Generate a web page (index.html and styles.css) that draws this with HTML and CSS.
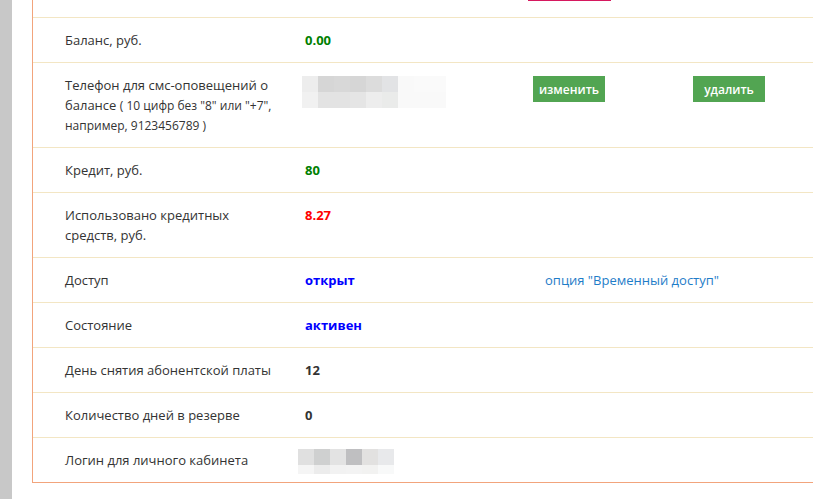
FILE: index.html
```html
<!DOCTYPE html>
<html lang="ru">
<head>
<meta charset="utf-8">
<title>Абонент</title>
<link rel="stylesheet" href="styles.css">
</head>
<body>
<div class="page">
  <div class="strip"></div>
  <div class="card">
    <div class="row top">
      <div class="cell label"></div>
      <div class="cell value"></div>
      <div class="cell extra"><div class="pinkbar"></div></div>
      <div class="cell extra2"></div>
    </div>
    <div class="row">
      <div class="cell label">Баланс, руб.</div>
      <div class="cell value"><b class="green">0.00</b></div>
      <div class="cell extra"></div>
      <div class="cell extra2"></div>
    </div>
    <div class="row">
      <div class="cell label">Телефон для смс-оповещений о балансе <span class="small">( 10 цифр без "8" или "+7", например, 9123456789 )</span></div>
      <div class="cell value">
        <div class="blur phone">
          <div class="b1"></div>
          <div class="b2"></div>
        </div>
      </div>
      <div class="cell extra"><button class="btn">изменить</button></div>
      <div class="cell extra2"><button class="btn">удалить</button></div>
    </div>
    <div class="row">
      <div class="cell label">Кредит, руб.</div>
      <div class="cell value"><b class="green">80</b></div>
      <div class="cell extra"></div>
      <div class="cell extra2"></div>
    </div>
    <div class="row">
      <div class="cell label">Использовано кредитных средств, руб.</div>
      <div class="cell value"><b class="red">8.27</b></div>
      <div class="cell extra"></div>
      <div class="cell extra2"></div>
    </div>
    <div class="row">
      <div class="cell label">Доступ</div>
      <div class="cell value"><b class="blue">открыт</b></div>
      <div class="cell extra wide"><a class="link" href="#">опция "Временный доступ"</a></div>
    </div>
    <div class="row">
      <div class="cell label">Состояние</div>
      <div class="cell value"><b class="blue">активен</b></div>
      <div class="cell extra"></div>
      <div class="cell extra2"></div>
    </div>
    <div class="row">
      <div class="cell label">День снятия абонентской платы</div>
      <div class="cell value"><b>12</b></div>
      <div class="cell extra"></div>
      <div class="cell extra2"></div>
    </div>
    <div class="row">
      <div class="cell label">Количество дней в резерве</div>
      <div class="cell value"><b>0</b></div>
      <div class="cell extra"></div>
      <div class="cell extra2"></div>
    </div>
    <div class="row last">
      <div class="cell label">Логин для личного кабинета</div>
      <div class="cell value">
        <div class="blur login">
          <div class="b1"></div>
          <div class="b2"></div>
        </div>
      </div>
      <div class="cell extra"></div>
      <div class="cell extra2"></div>
    </div>
  </div>
</div>
</body>
</html>
```

FILE: styles.css
```css
html, body {
  margin: 0;
  padding: 0;
  overflow: hidden;
  background: #ffffff;
}

body {
  font-family: "Open Sans", "Liberation Sans", sans-serif;
  font-size: 13px;
  color: #333333;
}

.page {
  display: flex;
  align-items: stretch;
  min-height: 499px;
}

.strip {
  width: 12px;
  flex: 0 0 12px;
  background: #c8c8c8;
}

.card {
  margin-left: 20px;
  width: 900px;
  flex: 0 0 900px;
  border-left: 1px solid #f2a47c;
  border-bottom: 1px solid #f2a47c;
  align-self: flex-start;
}

.row {
  display: grid;
  grid-template-columns: 272px 228px 160px 1fr;
  border-bottom: 1px solid #f3e6c4;
}

.row.last {
  border-bottom: none;
}

.row.top {
  height: 17px;
}

.cell {
  padding: 12px 0;
  line-height: 20px;
}

.row.top .cell {
  padding: 0;
}

.label {
  padding-left: 32px;
  padding-right: 22px;
}

.wide {
  grid-column: span 2;
  padding-left: 12px;
}

.small {
  font-size: 12px;
  line-height: 16px;
}

.pinkbar {
  width: 83px;
  height: 1px;
  margin-left: -5px;
  background: #d6185f;
}

b {
  font-weight: 700;
  color: #333333;
}

.green { color: #008000; }
.red { color: #ff0000; }
.blue { color: #0000ff; }

.link {
  color: #1f7dc8;
  text-decoration: none;
}

.btn {
  display: block;
  width: 72px;
  height: 26px;
  margin-top: 1px;
  border: none;
  background: #52a552;
  color: #ffffff;
  font-family: "Open Sans", "Liberation Sans", sans-serif;
  font-size: 12px;
  font-weight: 600;
  padding: 0;
}

.blur div {
  height: 16px;
}

.phone {
  margin-left: -3px;
  margin-top: 1px;
  width: 144px;
}

.phone .b1 {
  background: linear-gradient(to right,
    #ededed 0 16px, #d6d6d6 16px 32px, #d8d8d8 32px 48px, #d6d6d6 48px 64px,
    #dcdcdc 64px 80px, #e2e3e5 80px 96px, #f9f9f9 96px 112px, #fafafa 112px 144px);
}

.phone .b2 {
  background: linear-gradient(to right,
    #f1f1f1 0 16px, #e3e3e3 16px 48px, #e5e5e5 48px 64px,
    #ededed 64px 80px, #eaebea 80px 96px, #f9f9f9 96px 144px);
}

.login {
  margin-left: -7px;
  margin-top: -1px;
  margin-bottom: -4px;
  width: 96px;
}

.login .b1 {
  background: linear-gradient(to right,
    #e0e0e0 0 16px, #cfd0d0 16px 32px, #e3e3e3 32px 48px,
    #bfbfc1 48px 64px, #e2e1e0 64px 80px, #e8e9eb 80px 96px);
}

.login .b2 {
  height: 9px;
  background: linear-gradient(to right,
    #f5f5f5 0 16px, #ececec 16px 32px, #f2f2f2 32px 48px,
    #f3f3f3 48px 64px, #f2f2f1 64px 80px, #f8f9f9 80px 96px);
}
```
